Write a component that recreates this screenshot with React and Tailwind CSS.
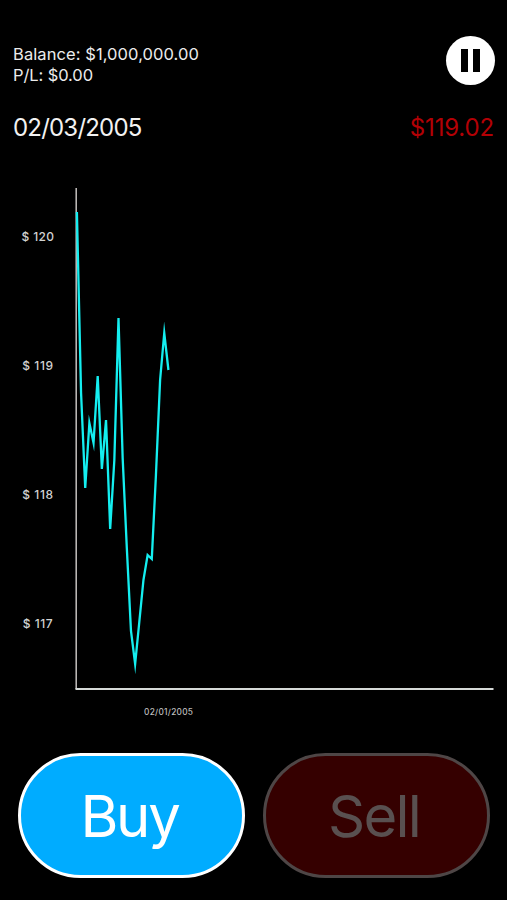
const prices = [212, 393, 488, 423, 443, 376, 469, 420, 529, 460, 318, 458, 548, 631, 664, 622, 580, 555, 559, 475, 380, 333, 370];
const START_X = 76.9;
const STEP = 4.16;
const points = prices.map((y, i) => `${(START_X + i * STEP).toFixed(2)},${y - 180}`).join(" ");

const ticks = [
  { label: "$ 120", y: 61, x: 21.5, w: 32.5 },
  { label: "$ 119", y: 190, x: 22.3, w: 30.7 },
  { label: "$ 118", y: 319, x: 22.3, w: 30.7 },
  { label: "$ 117", y: 448, x: 22.8, w: 29.7 },
];

function PauseButton() {
  return (
    <button aria-label="Pause" className="flex h-[49px] w-[49px] items-center justify-center gap-[5px] rounded-full bg-white">
      <span className="h-[23px] w-[7px] bg-black" />
      <span className="h-[23px] w-[7px] bg-black" />
    </button>
  );
}

function PriceChart() {
  return (
    <svg width="507" height="550" viewBox="0 0 507 550" className="block shrink-0">
      <path d="M76.2 8V509" stroke="#c4c0be" strokeWidth="1.5" fill="none" />
      <path d="M75.5 509H493.5" stroke="#d6dad8" strokeWidth="1.8" fill="none" />
      <polyline points={points} fill="none" stroke="#14eef0" strokeWidth="2.3" strokeLinejoin="miter" strokeMiterlimit="12" />
      {ticks.map((t) => (
        <text key={t.label} x={t.x} y={t.y} textLength={t.w} fill="#d2d2d2" fontSize="12" fontWeight="500">
          {t.label}
        </text>
      ))}
      <text x="144" y="535" textLength="49" fill="#bdbdbd" fontSize="8.3" fontWeight="500">
        02/01/2005
      </text>
    </svg>
  );
}

export default function App() {
  return (
    <main className="flex h-[900px] w-[507px] flex-col overflow-hidden bg-black font-['Inter',sans-serif] text-white">
      <header className="flex h-[108px] shrink-0 justify-between pt-9 pr-3 pl-[13px]">
        <div className="pt-2 text-[16.5px] leading-[21px] text-[#ececec]">
          <p className="tracking-[0.08px]">Balance: $1,000,000.00</p>
          <p className="tracking-[-0.1px]">P/L: $0.00</p>
        </div>
        <PauseButton />
      </header>
      <section className="flex h-[72px] shrink-0 justify-between pt-1 pr-[13px] pl-[13px] text-2xl leading-8">
        <span className="tracking-[-0.8px] text-[#f2f2f2]">02/03/2005</span>
        <span className="tracking-[-0.15px] text-[#b30005]">$119.02</span>
      </section>
      <PriceChart />
      <footer className="flex gap-[18px] pt-[23px] pl-[18px] text-[58px] font-normal tracking-[-2.2px]">
        <button className="flex h-[125px] w-[227px] items-center justify-center rounded-full border-[3px] border-white bg-[#00acff] pt-0.5 pr-1">Buy</button>
        <button className="flex h-[125px] w-[227px] items-center justify-center rounded-full border-[3px] border-[#4e4646] bg-[#350000] pt-0.5 pr-[5px] tracking-[-1.8px] text-[#595050]">Sell</button>
      </footer>
    </main>
  );
}
